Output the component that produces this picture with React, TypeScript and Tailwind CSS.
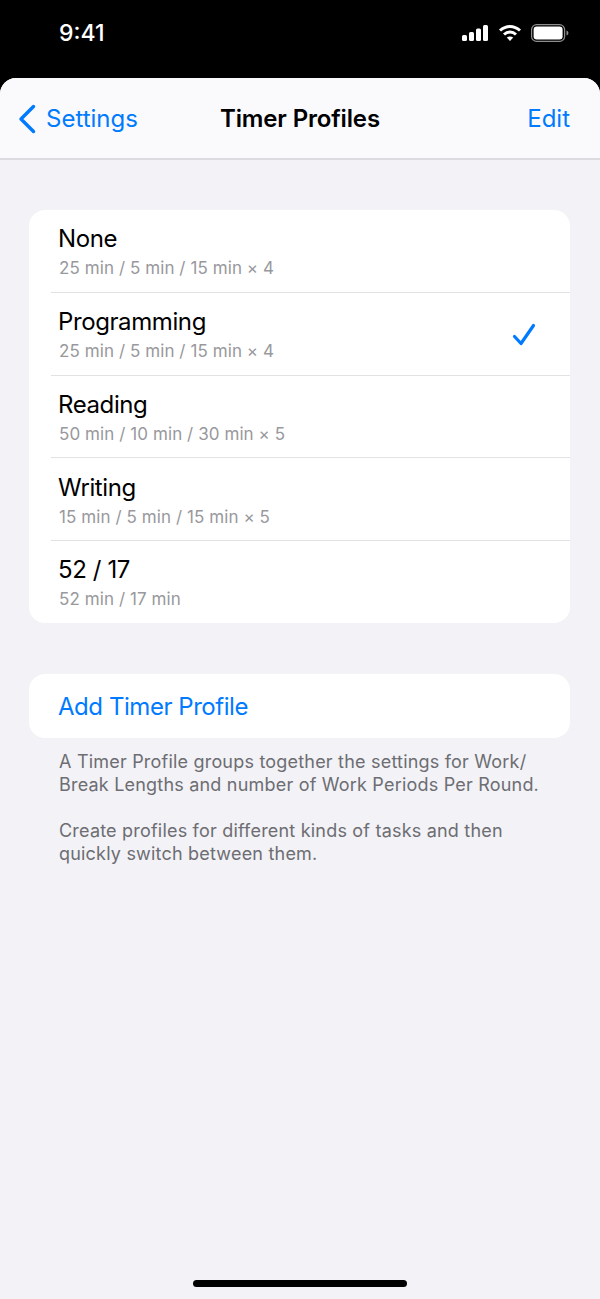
const profiles = [
  { name: 'None', detail: '25 min / 5 min / 15 min × 4' },
  { name: 'Programming', detail: '25 min / 5 min / 15 min × 4', selected: true },
  { name: 'Reading', detail: '50 min / 10 min / 30 min × 5' },
  { name: 'Writing', detail: '15 min / 5 min / 15 min × 5' },
  { name: '52 / 17', detail: '52 min / 17 min' },
]

function StatusIcons() {
  return (
    <div className="flex items-center gap-[9px]">
      <svg width="28" height="18" viewBox="0 0 28 18" fill="white">
        <rect x="1" y="11" width="5" height="6" rx="1.5" />
        <rect x="8" y="8" width="5" height="9" rx="1.5" />
        <rect x="15" y="4.5" width="5" height="12.5" rx="1.5" />
        <rect x="22" y="1" width="5" height="16" rx="1.5" />
      </svg>
      <svg width="24" height="18" viewBox="0 0 24 18" fill="none" stroke="white" strokeWidth="3">
        <path d="M2 6.5C8 1 16 1 22 6.5" />
        <path d="M6 10.5C9.5 7.3 14.5 7.3 18 10.5" />
        <path d="M12 17L8.8 13.6C10.6 12 13.4 12 15.2 13.6Z" fill="white" stroke="none" />
      </svg>
      <svg width="38" height="18" viewBox="0 0 38 18" fill="none">
        <rect x="0.6" y="0.6" width="33" height="16.8" rx="5" stroke="#8e8e8e" strokeWidth="1.2" />
        <rect x="2.6" y="2.6" width="29" height="12.8" rx="3.2" fill="white" />
        <path d="M35.5 6.5C36.8 7 37.4 8 37.4 9C37.4 10 36.8 11 35.5 11.5Z" fill="#8e8e8e" />
      </svg>
    </div>
  )
}

export default function App() {
  return (
    <div className="h-[1299px] w-[600px] overflow-hidden bg-black font-['Inter',sans-serif]">
      {/* status bar */}
      <div className="flex h-[78px] items-start justify-between pl-[59px] pr-[31px] pt-[18px]">
        <span className="text-[23px] font-medium leading-[30px] text-white">9:41</span>
        <div className="pt-[6px]">
          <StatusIcons />
        </div>
      </div>

      <div className="relative h-[1221px] overflow-hidden rounded-t-[16px] bg-[#f2f2f7]">
        {/* nav bar */}
        <div className="relative flex h-[82px] items-center justify-between border-b-2 border-[#dcdce0] bg-[#fafafd] pl-[18px] pr-[30px] pt-[2px]">
          <div className="flex items-center gap-[10px] text-[#007aff]">
            <svg width="18" height="30" viewBox="0 0 18 30" fill="none" stroke="currentColor" strokeWidth="3.4" strokeLinecap="round" strokeLinejoin="round">
              <path d="M15.5 2.5L3 15L15.5 27.5" />
            </svg>
            <span className="text-[24px] leading-[30px]">Settings</span>
          </div>
          <span className="absolute inset-x-0 text-center text-[24px] font-semibold leading-[30px] tracking-[-0.15px] text-black">
            Timer Profiles
          </span>
          <span className="text-[24px] leading-[30px] text-[#007aff]">Edit</span>
        </div>

        <div className="pl-[29px] pr-[30px] pt-[50px]">
          {/* profile list */}
          <div className="rounded-[16px] bg-white pl-[22px]">
            {profiles.map((profile, i) => (
              <div key={profile.name} className={i > 0 ? 'border-t border-[#e2e2e4]' : ''}>
                <div className="flex h-[81.75px] items-center justify-between pl-[8px] pr-[34px] pt-[2px]">
                  <div>
                    <div className="ml-[-1px] text-[24px] leading-[32px] tracking-[-0.4px] text-black">{profile.name}</div>
                    <div className="mt-[1px] text-[17px] leading-[24px] tracking-[0.08px] text-[#98989d]">{profile.detail}</div>
                  </div>
                  {profile.selected && (
                    <svg width="24" height="24" viewBox="0 0 24 24" fill="none" stroke="#007aff" strokeWidth="3.2" strokeLinecap="round" strokeLinejoin="round">
                      <path d="M2.5 13.5L9 20.5L21.5 2.5" />
                    </svg>
                  )}
                </div>
              </div>
            ))}
          </div>

          {/* add button */}
          <div className="mt-[51px] flex h-[64px] items-center rounded-[16px] bg-white pl-[29px] pt-[3px] text-[24px] tracking-[-0.45px] text-[#007aff]">
            Add Timer Profile
          </div>

          <div className="mt-[12px] px-[30px] text-[18px] leading-[23px] tracking-[0.2px] text-[#6d6d72]">
            <p>
              A Timer Profile groups together the settings for Work/
              <br />
              Break Lengths and number of Work Periods Per Round.
            </p>
            <p className="mt-[23px]">
              Create profiles for different kinds of tasks and then
              <br />
              quickly switch between them.
            </p>
          </div>
        </div>

        {/* home indicator */}
        <div className="absolute bottom-[12px] left-1/2 h-[7px] w-[214px] -translate-x-1/2 rounded-full bg-black" />
      </div>
    </div>
  )
}
